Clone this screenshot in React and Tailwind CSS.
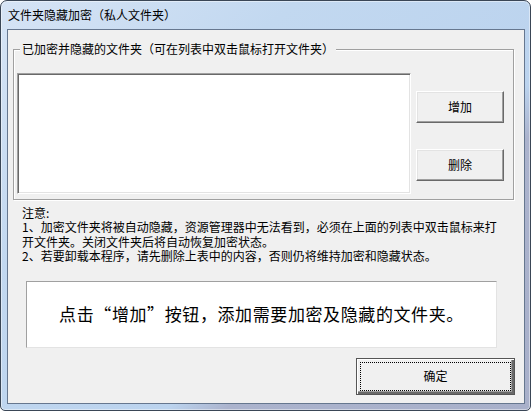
import React from 'react';

const raised =
  'bg-[#f0f0f0] border border-t-white border-l-white border-r-[#696969] border-b-[#696969] shadow-[inset_-1px_-1px_0_#a0a0a0,inset_1px_1px_0_#e3e3e3]';

const notes =
  '注意:\n' +
  '1、加密文件夹将被自动隐藏，资源管理器中无法看到，必须在上面的列表中双击鼠标来打\n' +
  '开文件夹。关闭文件夹后将自动恢复加密状态。\n' +
  '2、若要卸载本程序，请先删除上表中的内容，否则仍将维持加密和隐藏状态。';

const App = () => {
  return (
    <div className="w-[531px] h-[411px] flex flex-col pl-[6px] pr-[5px] border border-[#3a4656] rounded-t-[7px] rounded-b-[5px] shadow-[inset_0_0_0_1px_rgba(255,255,255,0.45)] bg-[linear-gradient(138deg,#d6e4f5_0%,#c2d8f0_30%,#bbd3ee_63%,#abb3cd_69%,#a8b0ca_100%)] font-['Noto_Sans_CJK_SC',sans-serif] text-black select-none overflow-hidden">
      {/* Title bar */}
      <div className="h-[28px] flex items-center pl-[1px] text-[12px] leading-[16px] shrink-0">
        文件夹隐藏加密（私人文件夹）
      </div>

      {/* Client area */}
      <div className="h-[375px] flex flex-col border border-[#66778f] bg-[#f0f0f0] shrink-0">
        {/* Group box */}
        <div className="relative mt-[19px] ml-[5px] w-[501px] h-[151px] border border-[#a0a0a0] shadow-[inset_1px_1px_0_#fff,1px_1px_0_#fff] shrink-0">
          <span className="absolute left-[6px] top-[-9px] px-[2px] bg-[#f0f0f0] text-[12px] leading-[16px] whitespace-nowrap">
            已加密并隐藏的文件夹（可在列表中双击鼠标打开文件夹）
          </span>
          <div className="flex pl-[3px] pt-[23px]">
            <div className="w-[394px] h-[121px] bg-white border border-t-[#a0a0a0] border-l-[#a0a0a0] border-r-white border-b-white shadow-[inset_1px_1px_0_#696969,inset_-1px_-1px_0_#e3e3e3]" />
            <div className="ml-[5px] mt-[18px] flex flex-col gap-[26px]">
              <button className={`w-[88px] h-[32px] text-[12px] leading-[16px] ${raised}`}>增加</button>
              <button className={`w-[88px] h-[32px] text-[12px] leading-[16px] ${raised}`}>删除</button>
            </div>
          </div>
        </div>

        {/* Notes */}
        <p className="mt-[6px] ml-[14px] text-[12px] leading-[14.4px] whitespace-pre">
          {notes}
        </p>

        {/* Hint box */}
        <div className="mt-[17px] ml-[18px] w-[471px] h-[67px] flex items-center justify-center bg-white border border-t-[#a0a0a0] border-l-[#a0a0a0] border-r-[#e3e3e3] border-b-[#e3e3e3] text-[17px] tracking-[0.6px] whitespace-nowrap shrink-0">
          点击“增加”按钮，添加需要加密及隐藏的文件夹。
        </div>

        {/* OK button */}
        <div className="mt-[10px] flex justify-end pr-[9px]">
          <button className="w-[159px] h-[37px] text-[12px] leading-[16px] bg-[#f0f0f0] border border-[#555] shadow-[inset_1px_1px_0_#fff,inset_-2px_-2px_0_#696969,inset_-3px_-3px_0_#a0a0a0] outline-1 outline-dotted outline-black outline-offset-[-5px]">
            确定
          </button>
        </div>
      </div>
    </div>
  );
};

export default App;
